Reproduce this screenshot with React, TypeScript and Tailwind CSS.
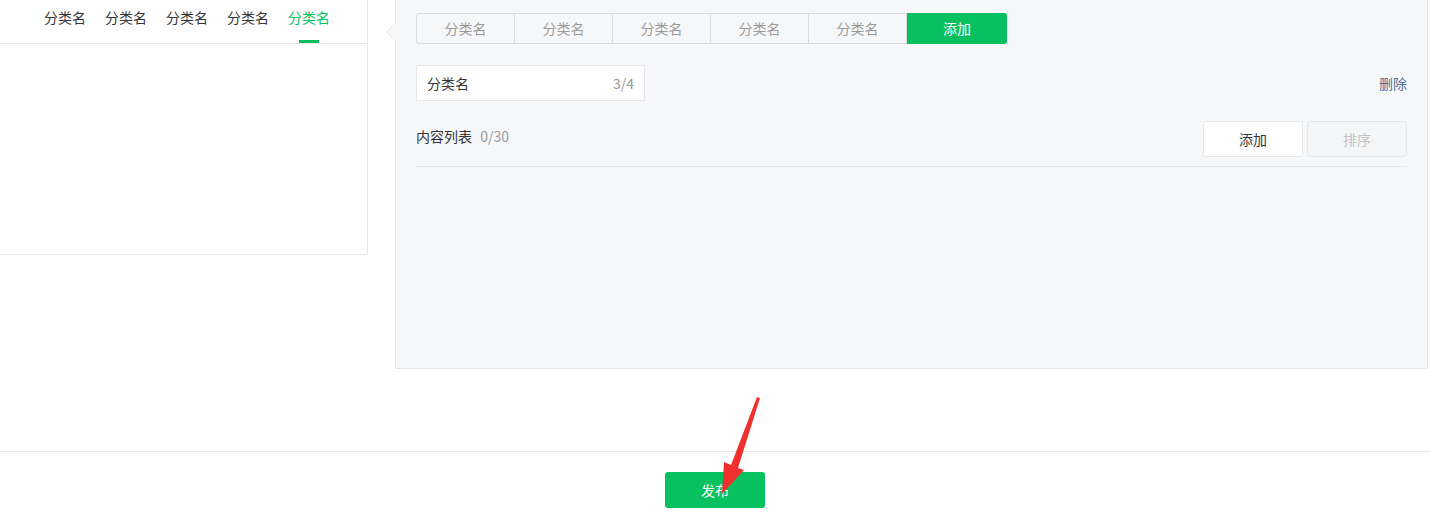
const font = { fontFamily: '"Noto Sans CJK SC", "Liberation Sans", sans-serif' }

export default function App() {
  const tabs = ["分类名", "分类名", "分类名", "分类名", "分类名"]
  return (
    <div className="relative h-[525px] w-[1430px] overflow-hidden bg-white text-[14px] text-[#353535]" style={font}>
      <div className="flex h-[451px] items-start">
        <div className="h-[255px] w-[368px] border-r border-b border-[#e7e7eb]">
          <div className="flex h-[44px] justify-end gap-[19px] border-b border-[#e7e7eb] pr-[37px]">
            {tabs.map((t, i) => (
              <div key={i} className={"relative pt-[7px] " + (i === 4 ? "text-[#07c160]" : "")}>
                {t}
                {i === 4 && <span className="absolute bottom-0 left-1/2 h-[3px] w-[20px] -translate-x-1/2 bg-[#07c160]" />}
              </div>
            ))}
          </div>
        </div>
        <div className="relative ml-[27px] h-[369px] w-[1033px] border border-t-0 border-[#e7e7eb] bg-[#f6f7f9] px-[20px] pt-[13px]">
          <span className="absolute left-[-10px] top-[22px] h-0 w-0 border-y-[10px] border-r-[10px] border-y-transparent border-r-[#e7e7eb]" />
          <span className="absolute left-[-9px] top-[22px] h-0 w-0 border-y-[10px] border-r-[10px] border-y-transparent border-r-[#f6f7f9]" />
          <div className="flex">
            {tabs.map((t, i) => (
              <div key={i} className={"flex h-[31px] w-[99px] items-center justify-center border border-[#dadbde] bg-[#f6f7f9] text-[#9a9a9a] " + (i === 0 ? "rounded-l-[3px]" : "-ml-px")}>
                {t}
              </div>
            ))}
            <div className="flex h-[31px] w-[100px] items-center justify-center rounded-r-[3px] bg-[#07c160] text-white">添加</div>
          </div>
          <div className="mt-[21px] flex items-center justify-between">
            <div className="flex h-[36px] w-[229px] items-center justify-between border border-[#e7e7eb] bg-white px-[10px]">
              <span>分类名</span>
              <span className="text-[#9a9a9a]">3/4</span>
            </div>
            <span className="text-[#576b95]">删除</span>
          </div>
          <div className="mt-[20px] flex h-[46px] items-start justify-between border-b border-[#e4e8eb]">
            <div className="pt-[5px]">
              内容列表 <span className="ml-[5px] text-[#9a9a9a]">0/30</span>
            </div>
            <div className="flex gap-[4px]">
              <div className="flex h-[36px] w-[100px] items-center justify-center rounded-[3px] border border-[#e4e8eb] bg-white">添加</div>
              <div className="flex h-[36px] w-[100px] items-center justify-center rounded-[3px] border border-[#e4e8eb] bg-[#f4f5f7] text-[#c4c4c4]">排序</div>
            </div>
          </div>
        </div>
      </div>
      <div className="flex justify-center border-t border-[#e7e7eb] pt-[20px]">
        <div className="flex h-[36px] w-[100px] items-center justify-center rounded-[3px] bg-[#07c160] text-white">发布</div>
      </div>
      <svg className="absolute left-0 top-0" width="1430" height="525">
        <polygon points="760,398 738,468 744,470 722,494 724,462 731,465 757,397" fill="#f0302f" />
      </svg>
    </div>
  )
}
